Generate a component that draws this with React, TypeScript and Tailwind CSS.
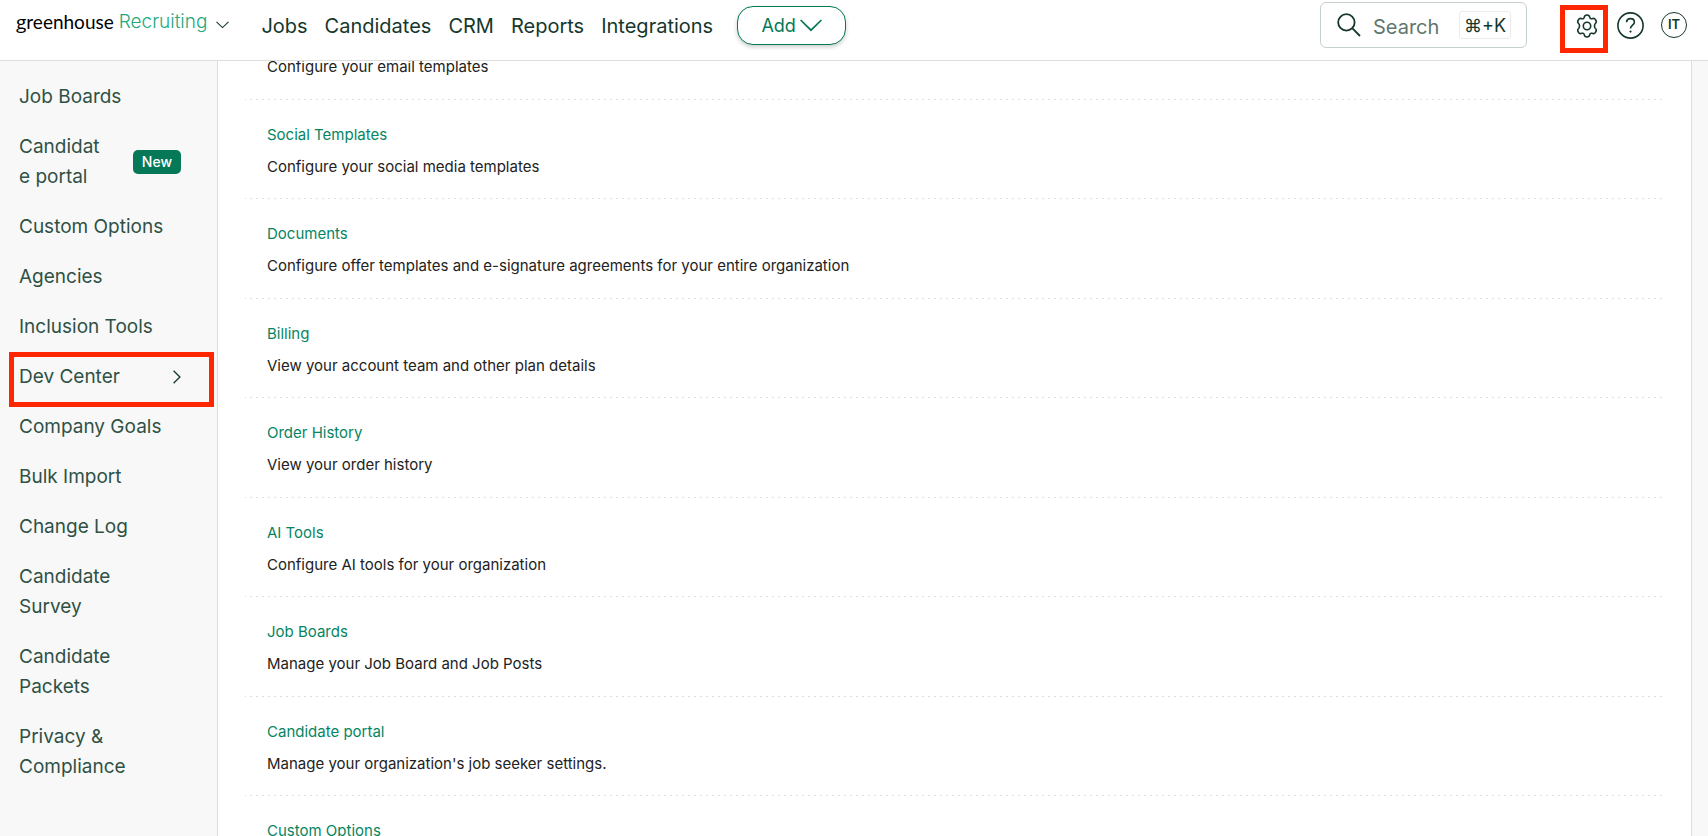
import React from "react";

const navItems = ["Jobs", "Candidates", "CRM", "Reports", "Integrations"];

type SideItem = { label: string; isNew?: boolean; active?: boolean };

const sideItems: SideItem[] = [
  { label: "Job Boards" },
  { label: "Candidate portal", isNew: true },
  { label: "Custom Options" },
  { label: "Agencies" },
  { label: "Inclusion Tools" },
  { label: "Dev Center", active: true },
  { label: "Company Goals" },
  { label: "Bulk Import" },
  { label: "Change Log" },
  { label: "Candidate Survey" },
  { label: "Candidate Packets" },
  { label: "Privacy & Compliance" },
];

type Setting = { title: string; text?: string };

const settings: Setting[] = [
  { title: "Social Templates", text: "Configure your social media templates" },
  { title: "Documents", text: "Configure offer templates and e-signature agreements for your entire organization" },
  { title: "Billing", text: "View your account team and other plan details" },
  { title: "Order History", text: "View your order history" },
  { title: "AI Tools", text: "Configure AI tools for your organization" },
  { title: "Job Boards", text: "Manage your Job Board and Job Posts" },
  { title: "Candidate portal", text: "Manage your organization's job seeker settings." },
  { title: "Custom Options" },
];

function Logo() {
  return (
    <button type="button" className="flex items-center leading-6">
      <span className="font-['Lato',sans-serif] text-[19px] text-black">
        <span className="font-['Open_Sans',sans-serif]">g</span>reenhouse
      </span>
      <span className="ml-[5px] text-[19px] font-light text-[#23a87c]">Recruiting</span>
      <svg className="ml-[9px] mt-[5px]" width="13" height="8" viewBox="0 0 13 8" fill="none" stroke="#15372c" strokeWidth="1.1">
        <path d="M0.5 0.8 6.5 6.6 12.5 0.8" />
      </svg>
    </button>
  );
}

function GearIcon() {
  return (
    <svg width="22" height="24" viewBox="0 0 22 24" fill="none" stroke="#15372c" strokeWidth="1.6" strokeLinejoin="round">
      <path d="M11 1C13 1 13.6 2.1 13.8 3.3C14 4.5 14.9 5 16 4.7C17.4 4.2 18.7 4.3 19.5 5.7C20.8 7.6 20.5 8.6 19.4 9.5C18.2 10.6 18.2 13.4 19.4 14.5C20.5 15.4 20.8 16.4 19.5 18.3C18.7 19.7 17.4 19.8 16 19.3C14.9 19 14 19.5 13.8 20.7C13.6 21.9 13 23 11 23C9 23 8.4 21.9 8.2 20.7C8 19.5 7.1 19 6 19.3C4.6 19.8 3.3 19.7 2.5 18.3C1.2 16.4 1.5 15.4 2.6 14.5C3.8 13.4 3.8 10.6 2.6 9.5C1.5 8.6 1.2 7.6 2.5 5.7C3.3 4.3 4.6 4.2 6 4.7C7.1 5 8 4.5 8.2 3.3C8.4 2.1 9 1 11 1Z" />
      <circle cx="11" cy="12" r="3.7" />
    </svg>
  );
}

function Header() {
  return (
    <header className="relative z-10 flex h-[61px] shrink-0 items-start border-b border-[#dedede] bg-white pl-4 pr-[21px] text-[#15372c]">
      <div className="pt-[10px]">
        <Logo />
      </div>
      <nav className="ml-8 flex gap-[17px] pt-[11px] text-[20px] leading-[30px]">
        {navItems.map((n) => (
          <a key={n} href="#">{n}</a>
        ))}
      </nav>
      <button
        type="button"
        className="ml-6 mt-[6px] flex h-[39px] w-[109px] items-center justify-center gap-1 rounded-[16px] border border-[#047857] bg-white text-[18px] text-[#047857] shadow-[0_2px_4px_rgba(0,0,0,0.2)]"
      >
        Add
        <svg width="22" height="13" viewBox="0 0 22 13" fill="none" stroke="currentColor" strokeWidth="1.7">
          <path d="M0.6 1 11 11.2 21.4 1" />
        </svg>
      </button>
      <label className="ml-auto mt-[2px] flex h-[46px] w-[207px] items-center rounded-[6px] border border-[#c5d0cc] pl-4 pr-[15px]">
        <svg width="24" height="24" viewBox="0 0 24 24" fill="none" stroke="#15372c" strokeWidth="1.8">
          <circle cx="9.4" cy="9.4" r="8.2" />
          <path d="M15.2 15.2 23 23" />
        </svg>
        <input
          type="text"
          aria-label="Search"
          placeholder="Search"
          className="ml-3 w-0 min-w-0 flex-1 bg-transparent pt-[3px] text-[20px] leading-[30px] outline-none placeholder:text-[#5f766e]"
        />
        <kbd className="flex h-7 w-[52px] items-center justify-center rounded-[3px] border border-[#ececec] font-['Inter','DejaVu_Sans',sans-serif] text-[18px]">
          ⌘+K
        </kbd>
      </label>
      <div className="ml-[33px] flex items-start">
        <button type="button" aria-label="Configure" className="mt-[5px] flex size-12 items-center justify-center border-[5px] border-[#ff2600] pb-[7px] pl-[6px]">
          <GearIcon />
        </button>
        <button type="button" aria-label="Help" className="ml-[9px] mt-3">
          <svg width="27" height="27" viewBox="0 0 27 27" fill="none" stroke="#15372c" strokeWidth="1.6">
            <circle cx="13.5" cy="13.5" r="12.6" />
            <path d="M9.6 10.3c0-2.3 1.7-3.7 3.9-3.7s3.9 1.5 3.9 3.6c0 2.9-3.9 3-3.9 6.3" />
            <circle cx="13.5" cy="19.6" r="1.1" fill="#15372c" stroke="none" />
          </svg>
        </button>
        <button type="button" className="ml-[17px] mt-3 flex size-[26px] items-center justify-center rounded-full border border-[#15372c] text-[13px] font-semibold">
          IT
        </button>
      </div>
    </header>
  );
}

function Sidebar() {
  return (
    <aside className="w-[218px] shrink-0 border-r border-[#dedede] bg-[#f8f8f8] pl-[19px] pr-9 pt-[11px] text-[19px] leading-[30px] text-[#2f5145]">
      {sideItems.map((item) => (
        <a key={item.label} href="#" className="relative flex items-center justify-between py-[10px]">
          <span className={item.isNew ? "w-[86px] break-all" : item.label.startsWith("Candidate") ? "w-[140px]" : ""}>
            {item.label}
          </span>
          {item.isNew && (
            <span className="rounded-[5px] bg-[#047857] px-[9px] text-[14px] font-medium leading-6 text-white">New</span>
          )}
          {item.active && (
            <>
              <svg width="8" height="14" viewBox="0 0 8 14" fill="none" stroke="#15372c" strokeWidth="1.3">
                <path d="M0.6 0.8 6.9 7 0.6 13.2" />
              </svg>
              <span className="pointer-events-none absolute -left-[10px] -right-[33px] top-0 h-[55px] border-[5px] border-[#ff2600]" />
            </>
          )}
        </a>
      ))}
    </aside>
  );
}

function Divider() {
  return <div className="h-px bg-[repeating-linear-gradient(90deg,#dedede_0_1px,transparent_1px_5px,#dedede_5px_6px)]" />;
}

export default function App() {
  return (
    <div className="flex h-screen flex-col overflow-hidden bg-white font-['Inter','Liberation_Sans',sans-serif]">
      <Header />
      <div className="flex min-h-0 flex-1 bg-[#f8f8f8]">
        <Sidebar />
        <main className="min-w-0 flex-1 bg-white px-[27px] text-[15px] leading-tight text-[#222]">
          <p className="-mt-[3px] px-[22px] pb-[22px]">Configure your email templates</p>
          {settings.map((s) => (
            <section key={s.title}>
              <Divider />
              <div className="flex flex-col gap-[13px] px-[22px] pb-[22px] pt-[26px]">
                <h2>
                  <a href="#" className="text-[#058562]">{s.title}</a>
                </h2>
                {s.text && <p>{s.text}</p>}
              </div>
            </section>
          ))}
        </main>
        <div className="w-[17px] shrink-0 border-l border-[#dedede]" />
      </div>
    </div>
  );
}
